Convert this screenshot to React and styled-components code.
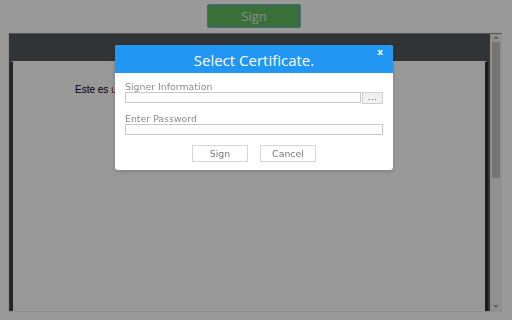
import React from "react";
import styled, { createGlobalStyle } from "styled-components";

const Global = createGlobalStyle`
  html, body { margin: 0; padding: 0; }
  body {
    margin: 0;
    background: #ffffff;
    font-family: "Liberation Sans", Arial, sans-serif;
    width: 512px;
    height: 320px;
    overflow: hidden;
  }
`;

const Page = styled.div`
  padding: 4px 10px 0 8px;
  display: flex;
  flex-direction: column;
  align-items: center;
  gap: 5px;
`;

const TopButton = styled.button`
  width: 94px;
  height: 24px;
  background: #5fba5f;
  border: 1px solid #7fa9d8;
  border-radius: 2px;
  font-family: "Open Sans", sans-serif;
  font-size: 13px;
  padding: 0;
  margin-left: -2px;
  color: #e4ece4;
`;

const Viewer = styled.div`
  align-self: stretch;
  height: 279px;
  display: flex;
  border: 1px solid #eeeeee;
  border-top-color: #8a8a8a;
  box-sizing: border-box;
`;

const ViewerMain = styled.div`
  flex: 1;
  display: flex;
  flex-direction: column;
  background: #525659;
`;

const Toolbar = styled.div`
  height: 27px;
  background: #53575a;
`;

const DocArea = styled.div`
  flex: 1;
  display: flex;
  padding: 0 2px 0 1px;
`;

const DocPage = styled.div`
  flex: 1;
  background: #fdfdfd;
  border-left: 3px solid #3c3c3c;
  border-right: 3px solid #2e2e2e;
  border-top: 1px solid #ffffff;
  padding: 22px 0 0 62px;
  font-size: 10px;
  color: #000;
`;

const Red = styled.span`
  color: #a02000;
`;

const Scrollbar = styled.div`
  width: 11px;
  background: #f1f1f1;
  display: flex;
  flex-direction: column;
  align-items: center;
  padding: 2px 0 3px;
  box-sizing: border-box;
`;

const Arrow = styled.div`
  width: 0;
  height: 0;
  border-left: 3px solid transparent;
  border-right: 3px solid transparent;
  ${(p) =>
    p.down
      ? "border-top: 3px solid #a3a3a3;"
      : "border-bottom: 3px solid #a3a3a3;"}
`;

const Thumb = styled.div`
  width: 8px;
  height: 136px;
  margin-top: 3px;
  background: #c1c1c1;
`;

const Spacer = styled.div`
  flex: 1;
`;

const Overlay = styled.div`
  position: fixed;
  inset: 0;
  background: rgba(0, 0, 0, 0.4);
`;

const Modal = styled.div`
  position: fixed;
  left: 115px;
  top: 45px;
  width: 278px;
  height: 125px;
  background: #ffffff;
  border-radius: 3px;
  overflow: hidden;
  display: flex;
  flex-direction: column;
  box-shadow: 0 1px 4px rgba(0, 0, 0, 0.2);
`;

const ModalHeader = styled.div`
  position: relative;
  height: 28px;
  background: #2196f3;
  color: #ffffff;
  font-family: "Open Sans", sans-serif;
  font-size: 15px;
  display: flex;
  align-items: center;
  justify-content: center;
  padding-top: 1px;
  box-sizing: border-box;
`;

const Close = styled.span`
  position: absolute;
  right: 10px;
  top: 2px;
  font-family: "DejaVu Sans", sans-serif;
  font-size: 9px;
  font-weight: bold;
`;

const ModalBody = styled.div`
  padding: 8px 10px 0;
  display: flex;
  flex-direction: column;
`;

const Label = styled.div`
  font-family: "DejaVu Sans", sans-serif;
  font-size: 9.4px;
  color: #8a8a8a;
  line-height: 11px;
  height: 11px;
  margin-top: ${(p) => p.gap || 0}px;
`;

const Row = styled.div`
  display: flex;
  height: 11px;
`;

const Input = styled.div`
  flex: 1;
  border: 1px solid #c6c6c6;
  box-sizing: border-box;
  background: #fff;
`;

const Browse = styled.div`
  width: 21px;
  height: 12px;
  margin-left: 1px;
  background: #f0f0f0;
  border: 1px solid #cfcfcf;
  box-sizing: border-box;
  color: #555;
  font-family: "DejaVu Sans", sans-serif;
  font-size: 9px;
  line-height: 8px;
  text-align: center;
  letter-spacing: 0.3px;
  overflow: hidden;
`;

const Buttons = styled.div`
  display: flex;
  justify-content: center;
  gap: 12px;
  margin-top: 10px;
`;

const ModalButton = styled.button`
  width: 56px;
  height: 17px;
  padding: 0;
  background: #ffffff;
  border: 1px solid #d6d6d6;
  color: #777;
  font-family: "DejaVu Sans", sans-serif;
  font-size: 9.4px;
`;

export default function App() {
  return (
    <>
      <Global />
      <Page>
        <TopButton>Sign</TopButton>
        <Viewer>
          <ViewerMain>
            <Toolbar />
            <DocArea>
              <DocPage>
                Este es <Red>un</Red>
              </DocPage>
            </DocArea>
          </ViewerMain>
          <Scrollbar>
            <Arrow />
            <Thumb />
            <Spacer />
            <Arrow down />
          </Scrollbar>
        </Viewer>
      </Page>
      <Overlay />
      <Modal>
        <ModalHeader>
          Select Certificate.
          <Close>x</Close>
        </ModalHeader>
        <ModalBody>
          <Label>Signer Information</Label>
          <Row>
            <Input />
            <Browse>...</Browse>
          </Row>
          <Label gap={10}>Enter Password</Label>
          <Row>
            <Input />
          </Row>
          <Buttons>
            <ModalButton>Sign</ModalButton>
            <ModalButton>Cancel</ModalButton>
          </Buttons>
        </ModalBody>
      </Modal>
    </>
  );
}
